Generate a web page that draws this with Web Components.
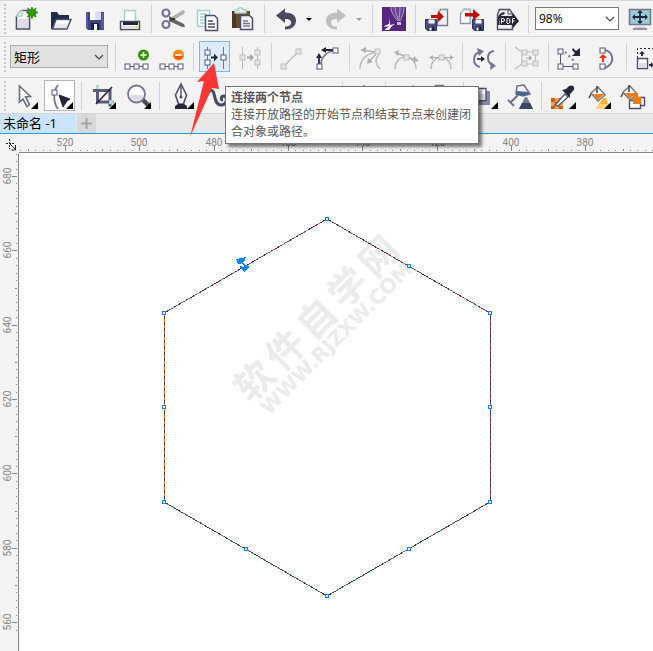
<!DOCTYPE html>
<html lang="zh-CN">
<head>
<meta charset="utf-8">
<title>未命名 -1</title>
<style>
  html, body { margin: 0; height: 100%; overflow: hidden; background: #f3f3f3; }
  body { font: 12px/17px "Open Sans", "Noto Sans CJK SC", sans-serif; color: #000; }
</style>
</head>
<body>
<draw-app></draw-app>

<script>
// Shared pieces of the toolbar icons.
const G = '#bdbdbd', GF = '#e6e6e6', D = '#4a495e', S = '#74768f', K = '#26263a';
const TRI = '<path d="M31 24v7h-7z" fill="#000"/>';
const sq = (x, y, c = '#55567a', f = '#fff') => `<rect x="${x - 2.5}" y="${y - 2.5}" width="5" height="5" fill="${f}" stroke="${c}"/>`;
const gs = (x, y) => sq(x, y, G, GF);
const arrow = (x, y, c) => `<path d="M${x} ${y - 1}h3v-3l4 4-4 4v-3h-3z" fill="${c}"/>`;
const floppy = (x, y) => `<path d="M${x} ${y}h11v11h-9l-2-2z" fill="#4a4f88" stroke="#2c3058"/><path d="M${x + 3} ${y}h6v4h-6z" fill="#fff"/><path d="M${x + 3} ${y + 7}h6v4h-6z" fill="#23243a"/><path d="M${x + 4} ${y + 8}h2v3h-2z" fill="#fff"/>`;
const bucket = (x, y) => `<g transform="translate(${x} ${y})"><path d="M3 7l7-6 7 8-7 6z" fill="#fff" stroke="${S}" stroke-width="1.5"/><path d="M5 8h11l-6 6z" fill="#f07d00"/><path d="M3 8L1 12M9 7V0" fill="none" stroke="${D}" stroke-width="1.6"/></g>`;
const nodeRow = `<path d="M8 27.5h20" stroke="#55567a"/>${sq(8.5, 27.5)}${sq(17.5, 27.5)}${sq(26.5, 27.5)}`;

const ICONS = {
  new: `<path d="M14.5 9.5h8v18.500h-13v-13z" fill="#f8f8fb" stroke="#4d4d66" stroke-width="1.6"/><path d="M10.5 18h11v9h-11z" fill="#dcdce6"/><path d="M9.500 15l5.500-6v6z" fill="#fff" stroke="#a7cfc9" stroke-width="1.5"/><path d="M25 6l1 3 3-2-1 3 3 1.5-3 1.5 1 3-3-1.5-1 3-1.5-3-3 1.5 1.5-3-3-1.5 3-1.5-1.5-3 3 2z" fill="#2f9400" stroke="#2f9400"/>`,
  open: `<path d="M9 11h6l2 3h10v5H14l-4 9H9z" fill="#232b4a"/><path d="M14 18.5h15l-4 9.5H10.5z" fill="#e6e7f0" stroke="#4b4d68" stroke-width="1.4"/><path d="M15 19.5h12l-1.500 3h-12z" fill="#fff"/>`,
  save: `<path d="M9 11h18v18H11l-2-2z" fill="#3f447c"/><path d="M9 11h2v16H9zM24 12h3v16h-3z" fill="#555a98"/><path d="M13 11h11v8H13z" fill="#fff"/><path d="M18 11h6v8h-6z" fill="#dcdcea"/><path d="M14 22h8v7h-8z" fill="#20223a"/><path d="M17 23h3v6h-3z" fill="#fff"/>`,
  print: `<path d="M12.5 9.5h11v13h-11z" fill="#fff" stroke="#a7cfc9" stroke-width="1.5"/><path d="M8.5 20.5h19v8h-19z" fill="#fff" stroke="#4b4b60" stroke-width="1.5"/><path d="M11 21h15v3H11z" fill="#26263a"/><path d="M10 25h16v3H10z" fill="#dedee8"/><path d="M24 25h2v2h-2z" fill="#ffe800"/>`,
  cut: `<path d="M15 17l13-8 2 1-1 3-12 7z" fill="#b5b0aa"/><path d="M15 16l14 7 1 3h-3l-13-6z" fill="#666"/><path d="M14 15l5 3-4 3z" fill="#444"/><circle cx="11" cy="12" r="3.5" fill="none" stroke="#74768f" stroke-width="2.2"/><circle cx="11" cy="23.5" r="3.5" fill="none" stroke="#74768f" stroke-width="2.2"/><circle cx="19" cy="18" r="1" fill="#111"/>`,
  copy: `<path d="M7.5 9.5h12v16h-12z" fill="#fff" stroke="#a7cfc9" stroke-width="1.5"/><path d="M10 13h7M10 16h5M10 19h5M10 22h5" stroke="#a7cfc9" stroke-width="1.3"/><path d="M15.5 14.5h9l3 3v12h-12z" fill="#fff" stroke="#4d4d6b" stroke-width="1.5"/><path d="M18 20h5M18 23h7M18 26h7" stroke="#4d4d6b" stroke-width="1.3"/>`,
  paste: `<path d="M7 10h18v17H7z" fill="#6b4e28"/><path d="M7 10h4v17H7z" fill="#4c3820"/><path d="M10 12V9h3c0-3 5-3 5 0h3v3z" fill="#fff" stroke="#a7cfc9" stroke-width="1.5"/><path d="M15.5 14.5h9l3 3v11h-12z" fill="#f4f4fa" stroke="#4d4d6b" stroke-width="1.5"/><path d="M18 20h5M18 22.5h7M18 25h7" stroke="#74768f" stroke-width="1.3"/>`,
  undo: `<path d="M8 14.5l9-7v4c8 0 11 4 11 8 0 6-5 9-11 9v-3c4 0 7-2 6-5-.7-2-3-2.5-6-2.5v4z" fill="#4a495e"/>`,
  redo: `<path d="M28 14.5l-9-7v4c-8 0-11 4-11 8 0 6 5 9 11 9v-3c-4 0-7-2-6-5 .7-2 3-2.5 6-2.5v4z" fill="#bfbfbf"/>`,
  caret: `<path d="M3 17h6l-3 3z" fill="#000"/>`,
  caretoff: `<path d="M3 17h6l-3 3z" fill="#a0a0a0"/>`,
  corel: `<path d="M6 6h24v24H6z" fill="#55267d"/><path d="M14 6h14c0 5-1 8-5 14-5-4-8-8-9-14z" fill="#6c4492"/><path d="M15 6c0 6 4 11 7 14M19 6c0 5 2 10 4 14M24 6c0 6-1 10-1 14M28 6c0 6-2 10-4 14" stroke="#b39bc8" fill="none"/><path d="M21 21h4v3h-4z" fill="#c9b8d8"/><path d="M14 17l-1 6c-2 1-4 1-5 3l5-1c-2 2-4 4-5 4h5l3-4 3-2-5 1z" fill="#fff"/>`,
  import: `<path d="M21.5 8.5h7v16h-10v-11z" fill="#f4f4fa" stroke="#74768f" stroke-width="1.3"/><path d="M19 14l4-6h6" fill="none" stroke="#a7cfc9"/>${floppy(6.5, 18.5)}<path d="M12 14h7v-4l6 5.5-6 5.5v-4h-7z" fill="#c00d00"/>`,
  export: `<path d="M9.5 8.5h7v14h-10v-10z" fill="#fff" stroke="#8f91a8" stroke-width="1.3"/><path d="M7 12l3-4h6v14" fill="none" stroke="#a7cfc9" stroke-width="1.3"/>${floppy(18.5, 18.5)}<path d="M11 12h8v-4l7 6-7 5.5v-4h-8z" fill="#c00d00"/>`,
  pdf: `<path d="M10.5 8.5h10l3 4v16h-15v-15z" fill="#eeeef4" stroke="#4d4d66" stroke-width="1.4"/><path d="M19 8v5h5" fill="none" stroke="#4d4d66"/><path d="M11 15h13v-3l6 8-6 7v-3H11z" fill="#26263a"/><path d="M9.500 24c0-7 0-11 6-12" fill="none" stroke="#26263a" stroke-width="2"/><path d="M12.5 22.5v-5h1.5q1.5 0 1.5 1.5t-1.5 1.5h-1M18 17.5v5h1.500q1.5 0 1.5-2.5t-1.5-2.5zM23.5 22.5v-5h2.500M23.5 20h2" fill="none" stroke="#fff"/>`,
  fit: `<path d="M7.5 8.5h21v15h-21z" fill="#9bcbd7" stroke="#74768f" stroke-width="1.6"/><path d="M13 24h10v4H13z" fill="#d4d5df"/><path d="M11 28h14" stroke="#74768f" stroke-width="1.6"/><path d="M18 10v12M11 16h14" stroke="#26263a" stroke-width="1.8"/><path d="M15 12l3-3 3 3zM15 20l3 3 3-3zM13 13l-3 3 3 3zM23 13l3 3-3 3z" fill="#26263a"/>`,
  add: `${nodeRow}<circle cx="24.5" cy="16" r="5.500" fill="#2f9400"/><path d="M21.5 16h6M24.5 13v6" stroke="#fff" stroke-width="1.6"/>`,
  remove: `${nodeRow}<circle cx="24.5" cy="16" r="5.5" fill="#ff8a1a"/><path d="M19.5 17a5.5 5.5 0 0 0 10 0z" fill="#ff5000"/><path d="M21.5 16h6" stroke="#fff" stroke-width="1.6"/>`,
  join: `<path d="M10.5 8v22M26.5 8v22" stroke="#74768f"/>${sq(10.5, 13.5)}${sq(10.5, 23.5)}${sq(26.5, 18.5)}${arrow(14, 18.5, K)}`,
  break: `<path d="M10.5 8v22M25.5 8v22" stroke="${G}"/>${gs(10.5, 18.5)}${gs(25.5, 13.5)}${gs(25.5, 23.5)}${arrow(15, 18.5, '#a8a8a8')}`,
  line: `<path d="M8.5 27.5L23.5 12.5" stroke="${G}" stroke-width="1.4"/>${gs(8.5, 27.5)}${gs(23.5, 12.5)}`,
  curve: `<path d="M11 26c0-8 6-14 14-14" fill="none" stroke="#74768f" stroke-width="1.7"/><path d="M24 11H14M9 25V16" stroke="${K}" stroke-width="1.8"/><path d="M16 8v6l-5-3zM6 19h6l-3-5z" fill="${K}"/>${sq(9.5, 27.5)}${sq(25.5, 11.5)}`,
  cusp: `<path d="M7 30c0-9 6-15 14-16M26 16c-5 4-3 10 1 14" fill="none" stroke="${G}" stroke-width="1.6"/><path d="M22 13L10 11M23 15l-7 8" stroke="#b0b0b0" stroke-width="1.4"/><path d="M13 8v6l-6-3zM15 19l5 4-6 2z" fill="#b0b0b0"/>${gs(24.5, 12.5)}`,
  smooth: `<path d="M7 30c0-7 4-12 11-12 7 1 10 6 10 12" fill="none" stroke="${G}" stroke-width="1.6"/><path d="M8 14l20 7" stroke="#b0b0b0" stroke-width="1.4"/><path d="M11 11l-1 6-4-4zM26 17l-1 6 6-1z" fill="#b0b0b0"/>${gs(18.5, 18.5)}`,
  symmetric: `<path d="M8 30c0-7 4-11 10-12 6 1 10 5 10 12" fill="none" stroke="${G}" stroke-width="1.6"/><path d="M8 18.5h20" stroke="#b0b0b0"/><path d="M10 16v5l-4-2.500zM27 16v5l4-2.5z" fill="#b0b0b0"/>${gs(18.5, 18.5)}`,
  reverse: `<path d="M14 28c-8-2-8-13 0-15M28 12c-8 1-8 12 0 15" fill="none" stroke="#74768f" stroke-width="2"/><path d="M11 9l7 3-5 5zM24 31l6-4-5-4z" fill="#74768f"/><path d="M11 20h7" stroke="${K}" stroke-width="1.6"/><path d="M15 17v6l4-3z" fill="${K}"/>`,
  extend: `<path d="M6 8l7 5v12l-7 5M12 13h14M12 25h14M26.5 14v10" fill="none" stroke="${G}" stroke-width="1.2"/>${gs(15.5, 13.5)}${gs(15.5, 24.5)}${gs(26.5, 13.5)}${gs(26.5, 24.5)}<path d="M17 19h5" stroke="#a8a8a8"/><path d="M20 16v6l3-3z" fill="#a8a8a8"/>`,
  extract: `<path d="M8.5 14v13.500h15" fill="none" stroke="#55567a"/><path d="M13 13l10 10" stroke="#74768f" stroke-width="2" stroke-dasharray="2 3"/><path d="M21 9l3 3 4-3v8h-8l3-3-3-3z" fill="${K}"/>${sq(8.5, 12.5)}${sq(8.5, 27.5)}${sq(23.5, 27.5)}`,
  close: `<path d="M17 11c11 1 11 16 0 18" fill="none" stroke="#74768f" stroke-width="2"/>${sq(15.5, 11.5)}${sq(15.5, 27.5)}<path d="M15 23v-4h-3l4-4 4 4h-3v4z" fill="#ff3200"/>`,
  stretch: `<path d="M7.5 19v-9.500h26" fill="none" stroke="${K}" stroke-dasharray="2 2"/><path d="M7.5 19.5h10v10h-10z" fill="#fff" stroke="#4d4d6b" stroke-width="1.4"/><path d="M8 24h9v5H8z" fill="#dedee8"/><path d="M12 17v-3M19 26h3" stroke="${K}" stroke-width="1.8"/><path d="M9 15h6l-3-3zM21 23l3 3-3 3z" fill="${K}"/>`,
  pick: `<path d="M12.5 8l11 10.5-5 .5 4 7.5-2.5 2-4-7.5-3.5 3z" fill="#fff" stroke="#6b6d85" stroke-width="1.6"/>${TRI}`,
  node: `<path d="M16 7c-5 6-5 17 0 24" fill="none" stroke="#74768f" stroke-width="1.8"/><path d="M17 17l11 4-3 2-4 6z" fill="${K}" stroke="${K}"/>${sq(12.5, 14.5)}${TRI}`,
  crop: `<path d="M8 12.5h17v16M12.5 7v17h16" fill="none" stroke="#5a5b78" stroke-width="3"/><path d="M11 26L27 9" stroke="#26263a" stroke-width="1.6"/><path d="M11 7h3v4h-3zM24 22h4v4h-4z" fill="#b0d6d0"/>${TRI}`,
  zoom: `<path d="M22 21l8 8" stroke="${D}" stroke-width="4.5"/><circle cx="16.5" cy="16" r="8.5" fill="#fff" stroke="#74768f" stroke-width="1.8"/><path d="M10 17a6.5 6 0 0 0 13 0z" fill="#dcdce6"/>${TRI}`,
  pen: `<path d="M18 6l5.5 11-3 9h-5l-3-9z" fill="#f4f4fa" stroke="#4d4d6b" stroke-width="1.6"/><path d="M18 7v12" stroke="#4d4d6b" stroke-width="1.4"/><circle cx="18" cy="19" r="1.5" fill="#4d4d6b"/><path d="M12 31v-3l3-2h6l3 2v3z" fill="#26263a"/>${TRI}`,
  squiggle: `<path d="M9 16c2-4 6-5 7 0s2 11 7 11c6 0 7-8 3-9-3 0-4 4-1 4" fill="none" stroke="${D}" stroke-width="3"/>`,
  shape: '',
  dimension: `<path d="M15 10l3-3 3 3z" fill="${K}"/>`,
  connector: `<path d="M20 11l4-4 3 4z" fill="#74768f"/>`,
  effect: `<path d="M11.5 7.5h8v5h-8z" fill="#f07d00" stroke="#74768f" stroke-width="1.5"/>`,
  shadow: `<path d="M5 13h18v14H5z" fill="#8586a3"/><path d="M4 10.500h15v12H4z" fill="#fff" stroke="#4d4d6b" stroke-width="1.4"/><path d="M5 16h13v6H5z" fill="#e1e1ec"/>${TRI}`,
  glass: `<path d="M15 8l7-1 6 9-7 2-7-2z" fill="#f4f4fa" stroke="#6b6d85" stroke-width="1.5"/><path d="M15 13l11 1 1 2-6 2-7-2z" fill="#46668a"/><path d="M16 17l-7 7M6 22l6 6" stroke="#6b6d85" stroke-width="1.8"/><path d="M23 19h2l6 12H17z" fill="#767b95"/><path d="M20 25h8l3 6H17z" fill="#3c4664"/>`,
  dropper: `<path d="M6 20h12v11H6z" fill="#f5a04d"/><path d="M6 20h4v4H6zM14 20h4v4h-4zM10 24h4v4h-4zM6 28h4v3H6zM14 28h4v3h-4z" fill="#cf5f00"/><path d="M10 27l10-11 3 3-10 9z" fill="#fff" stroke="#5a5b78" stroke-width="1.5"/><path d="M17 12l4-1 3-3c4-2 7 2 4 5l-3 3v4z" fill="#26263a"/>${TRI}`,
  fill: `${bucket(8, 8)}<path d="M23 20h3l4 11H16z" fill="#f7b52e"/><path d="M20 26h9l1 5H16z" fill="#ffd573"/>${TRI}`,
  fill2: `<path d="M18.5 19.5h11v8h-11z" fill="#fff" stroke="#4d4d6b" stroke-width="1.4"/><path d="M14.5 22.5h11v8h-11z" fill="#fff" stroke="#4d4d6b" stroke-width="1.4"/>${bucket(5, 7)}<path d="M18 15h5v4h3v7h-8z" fill="#f07d00"/>`,
};

class Base extends HTMLElement {
  connectedCallback() {
    if (this.shadowRoot) return;
    this.attachShadow({ mode: 'open' }).innerHTML = this.view();
    this.ready?.();
  }
}

class ToolBar extends Base {
  view() {
    return `<style>
      :host { display: flex; align-items: center; height: var(--bar-height, 35px); overflow: hidden; border-bottom: 1px solid #d6d6d6; background: #f3f3f3; }
      i { flex: none; width: 2px; height: 30px; margin: 0 1px 0 4px; background: repeating-linear-gradient(#c4c4c4 0 2px, transparent 2px 4px); }
    </style><i></i><slot></slot>`;
  }
}
class ToolSep extends Base {
  view() { return `<style>:host { flex: none; width: 1px; height: 28px; margin: 0 3px 0 4px; background: #d2d2d2; }</style>`; }
}
class ToolButton extends Base {
  view() {
    const narrow = this.hasAttribute('narrow');
    const w = narrow ? 12 : 35;
    const icon = this.getAttribute('icon');
    return `<style>
      :host { flex: none; display: flex; margin: 0 2px; }
      :host([narrow]) { margin: 0 3px 0 0; }
      button { display: flex; align-items: center; justify-content: center; width: 31px; height: 31px; padding: 0; border: 0; background: none; }
      :host([narrow]) button { width: 12px; }
      button[aria-pressed=true] { background: #dcecfa; box-shadow: inset 0 0 0 1px #7ab8ea; }
      :host([tool]) button[aria-pressed=true] { background: #fff; box-shadow: inset 0 0 0 1px #b5b5b5; }
      svg { flex: none; display: block; }
    </style><button type="button" aria-label="${this.getAttribute('label') || icon}" aria-pressed="${this.hasAttribute('active')}"><svg width="${w}" height="35" viewBox="0 0 ${w} 35" aria-hidden="true">${ICONS[icon]}</svg></button>`;
  }
}
class ToolSelect extends Base {
  view() {
    return `<style>
      :host { flex: none; display: grid; align-items: center; margin: 0 3px; }
      select, svg { grid-area: 1 / 1; }
      select { appearance: none; box-sizing: border-box; width: var(--select-width, 84px); height: 23px; padding: 0 3px; margin: 0; border: 1px solid var(--select-border, #777); border-radius: 0; background: var(--select-fill, #fff); color: #000; font: var(--select-size, 12px)/20px "Open Sans", "Noto Sans CJK SC", sans-serif; }
      svg { justify-self: end; margin-right: 4px; pointer-events: none; }
    </style><select aria-label="${this.getAttribute('label')}"><option>${this.getAttribute('value')}</option></select>
    <svg width="10" height="8" aria-hidden="true"><path d="M1 2l4 4 4-4" fill="none" stroke="#444" stroke-width="1.2"/></svg>`;
  }
}
class DocTabs extends Base {
  view() {
    return `<style>
      :host { display: flex; height: 19px; background: #e8e8e8; border-bottom: 1px solid #1a9fe8; }
      button { border: 0; padding: 0; margin: 0; font: 13px/19px "Open Sans", "Noto Sans CJK SC", sans-serif; }
      .tab { width: 76px; padding-left: 3px; text-align: left; white-space: nowrap; background: #cce2ff; color: #000; }
      .add { display: grid; place-items: center; width: 19px; margin-left: 1px; background: #d9d9d9; }
    </style><button class="tab" type="button"><slot></slot></button>
    <button class="add" type="button" aria-label="新建"><svg width="11" height="11" aria-hidden="true"><path d="M5.5 0v11M0 5.5h11" stroke="#a6a6a6" stroke-width="2"/></svg></button>`;
  }
}
// A ruler with a tick every 2 units and a label every 20.
class RulerStrip extends Base {
  view() {
    return `<style>
      :host { display: block; overflow: hidden; min-width: 0; min-height: 0; }
      svg { display: block; width: 100%; height: 100%; }
      text { font: 10px Roboto, sans-serif; fill: #868686; text-anchor: middle; }
    </style><svg></svg>`;
  }
  ready() { this.draw(); window.addEventListener('resize', () => this.draw()); }
  draw() {
    const vertical = this.hasAttribute('vertical');
    const length = vertical ? this.clientHeight : this.clientWidth;
    const origin = +this.getAttribute('origin'), first = +this.getAttribute('first');
    let out = '';
    for (let n = -8; ; n++) {
      const at = Math.round(origin + n * 7.435);
      if (at > length) break;
      if (at < 0) continue;
      const size = n % 10 === 0 ? 5 : n % 5 === 0 ? 2 : 1;
      out += vertical
        ? `<rect x="${17 - size}" y="${at}" width="${size}" height="1" fill="#868686"/>`
        : `<rect x="${at}" y="${17 - size}" width="1" height="${size}" fill="#868686"/>`;
      if (n % 10 === 0) {
        const v = first - n * 2;
        out += vertical
          ? `<text transform="translate(11 ${at}) rotate(-90)">${v}</text>`
          : `<text x="${at}" y="12">${v}</text>`;
      }
    }
    this.shadowRoot.querySelector('svg').innerHTML = out;
  }
}
class HexCanvas extends Base {
  view() {
    const pts = '327,219 490,313 490,502 327,596 164,502 164,313';
    const nodes = [[327, 219], [409, 266], [490, 313], [490, 407], [490, 502], [409, 549], [327, 596], [246, 549], [164, 502], [164, 407], [164, 313]];
    return `<style>
      :host { display: block; position: relative; overflow: hidden; background: #fff; }
      svg { position: absolute; inset: 0; width: 100%; height: 100%; }
      .mark { position: absolute; left: 303px; top: 171px; width: 0; height: 0; display: flex; flex-direction: column; align-items: center; justify-content: center; transform: rotate(-45deg); color: #ebebeb; }
      .cn { display: flex; gap: 6px; font: bold 38px/40px "Noto Sans CJK SC", sans-serif; }
      .en { font: bold 20px/20px "DejaVu Sans", sans-serif; }
    </style>
    <div class="mark"><div class="cn"><span>软</span><span>件</span><span>自</span><span>学</span><span>网</span></div><div class="en">WWW.RJZXW.COM</div></div>
    <svg aria-hidden="true"><g transform="translate(-19 -153)" shape-rendering="crispEdges">
      <g fill="none">
        <polygon points="${pts}" stroke="#3a3a3a"/>
        <path d="M164 313L327 219 490 313" stroke="#c0457a" stroke-dasharray="2 5"/>
        <path d="M164 313L327 219 490 313" stroke="#6fae8a" stroke-dasharray="2 12" stroke-dashoffset="4"/>
        <path d="M164 502L327 596 490 502" stroke="#c0457a" stroke-dasharray="2 9"/>
        <path d="M164 502L327 596 490 502" stroke="#3a8a90" stroke-dasharray="2 5" stroke-dashoffset="3"/>
        <path d="M164 313V502" stroke="#f0641e" stroke-dasharray="3 3"/>
        <path d="M490 313V502" stroke="#b0307c" stroke-dasharray="3 3"/>
      </g>
      <g fill="#fff" stroke="#0a84ff">${nodes.map(([x, y]) => `<rect x="${x - 1.5}" y="${y - 1.5}" width="3" height="3"/>`).join('')}</g>
      <path d="M236 259l10-2-2 5-4 2-2 0zM240 266l3 1 5-2 1 2-5 5-3-3zM243 262l3 4h-2l-3-3z" fill="#0a84ff"/>
    </g></svg>`;
  }
}
class HintTip extends Base {
  view() {
    return `<style>
      :host { position: absolute; left: 225px; top: 85px; box-sizing: border-box; width: 254px; padding: 1px 5px 4px; background: #fff; border: 1px solid #767676; box-shadow: 3px 3px 3px rgba(0,0,0,.5); color: #575757; font: 12px/17px "Noto Sans CJK SC", sans-serif; }
      b, p { display: block; margin: 0; }
    </style><b><slot name="title"></slot></b><p><slot></slot></p>`;
  }
}
class CalloutArrow extends Base {
  view() {
    return `<style>:host { position: absolute; left: 190px; top: 61px; pointer-events: none; } svg { display: block; }</style>
    <svg width="30" height="76" aria-hidden="true"><path d="M24 1L7 20l7-1L0 75l22-49 7 1z" fill="#fb3636"/></svg>`;
  }
}
class DrawApp extends Base {
  view() {
    const b = s => s.split(' ').map(i => i === '|' ? '<tool-sep></tool-sep>' : `<tool-button icon="${i}"${i.startsWith('caret') ? ' narrow' : ''}></tool-button>`).join('');
    return `<style>
      :host { position: relative; display: flex; flex-direction: column; height: 100vh; overflow: hidden; box-sizing: border-box; border-top: 1px solid #d6d6d6; }
      tool-bar, doc-tabs { flex: none; }
      .props { --bar-height: 39px; --select-width: 98px; --select-fill: #e1e1e1; --select-border: #adadad; --select-size: 13px; padding-bottom: 1px; }
      .work { flex: 1; min-height: 0; display: grid; grid-template: 19px minmax(0, 1fr) / 19px minmax(0, 1fr); }
      .top { border-bottom: 1px solid #868686; }
      .left { border-right: 1px solid #868686; }
    </style>
    <tool-bar>${b('new open save print | cut copy paste | undo caret redo caretoff | corel | import export pdf |')}<tool-select label="缩放" value="98%"></tool-select>${b('fit')}</tool-bar>
    <tool-bar class="props"><tool-select label="选取模式" value="矩形"></tool-select>${b('| add remove |')}<tool-button icon="join" label="连接两个节点" active></tool-button>${b('break | line curve | cusp smooth symmetric | reverse | extend | extract close | stretch')}</tool-bar>
    <tool-bar>${b('pick')}<tool-button icon="node" label="形状" tool active></tool-button>${b('| crop zoom | pen squiggle shape shape shape | dimension | connector effect | shadow glass | dropper fill fill2')}</tool-bar>
    <doc-tabs>未命名 -1</doc-tabs>
    <div class="work">
      <svg width="19" height="19" aria-hidden="true"><path d="M6 9.5h8M9.5 5v10" stroke="#222" stroke-dasharray="2 1"/><path d="M10 10l5 5M15.5 11v5h-4" fill="none" stroke="#222"/></svg>
      <ruler-strip class="top" origin="46" first="520"></ruler-strip>
      <ruler-strip class="left" vertical origin="23" first="680"></ruler-strip>
      <hex-canvas></hex-canvas>
    </div>
    <hint-tip><span slot="title">连接两个节点</span>连接开放路径的开始节点和结束节点来创建闭合对象或路径。</hint-tip>
    <callout-arrow></callout-arrow>`;
  }
}
const parts = { 'tool-bar': ToolBar, 'tool-sep': ToolSep, 'tool-button': ToolButton, 'tool-select': ToolSelect, 'doc-tabs': DocTabs, 'ruler-strip': RulerStrip, 'hex-canvas': HexCanvas, 'hint-tip': HintTip, 'callout-arrow': CalloutArrow, 'draw-app': DrawApp };
for (const [name, cls] of Object.entries(parts)) customElements.define(name, cls);
</script>
</body>
</html>
